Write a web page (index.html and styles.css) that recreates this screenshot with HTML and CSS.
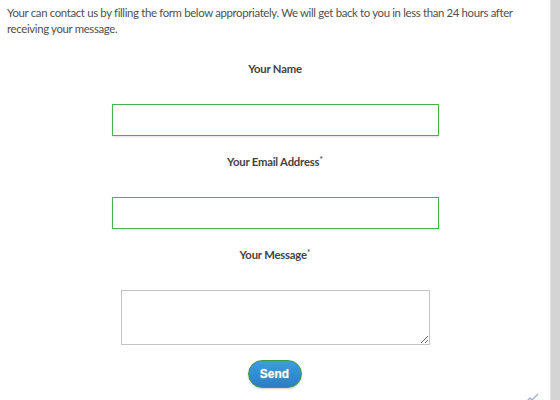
FILE: index.html
```html
<!DOCTYPE html>
<html>
<head>
<meta charset="utf-8">
<link rel="stylesheet" href="styles.css">
</head>
<body>
<div class="page">
  <main class="content">
    <p class="intro">Your can contact us by filling the form below appropriately. We will get back to you in less than 24 hours after receiving your message.</p>
    <form class="form">
      <label class="label">Your Name</label>
      <input class="field" type="text">
      <label class="label">Your Email Address<span class="req">*</span></label>
      <input class="field" type="text">
      <label class="label">Your Message<span class="req">*</span></label>
      <textarea class="message"></textarea>
      <button class="send" type="button">Send</button>
    </form>
    <svg class="corner" width="14" height="10" viewBox="0 0 14 10"><path d="M1 9 L4 6 L6 8 L12 2" fill="none" stroke="#9fb3cc" stroke-width="1.4"/></svg>
  </main>
  <div class="rail"></div>
</div>
</body>
</html>
```
FILE: styles.css
```css
html, body {
  margin: 0;
  padding: 0;
  background: #fff;
  height: 100%;
  overflow: hidden;
}
.page {
  display: flex;
  height: 400px;
}
.content {
  flex: 1;
  position: relative;
  font-family: Lato, "Open Sans", sans-serif;
  color: #555;
}
.rail {
  width: 9px;
  background: #d4d4d4;
  border-left: 1px solid #e2e2e2;
}
.intro {
  margin: 0;
  padding: 5px 8px 0 7px;
  font-size: 11.4px;
  letter-spacing: -0.35px;
  line-height: 16px;
  color: #505050;
}
.form {
  display: flex;
  flex-direction: column;
  align-items: center;
  margin-top: 23px;
}
.label {
  display: block;
  font-size: 11.3px;
  letter-spacing: -0.2px;
  font-weight: bold;
  line-height: 18px;
  color: #444;
  margin-bottom: 26px;
}
.req {
  font-weight: normal;
  font-size: 9px;
  vertical-align: top;
  line-height: 14px;
}
.field {
  box-sizing: border-box;
  width: 327px;
  height: 32px;
  border: 1px solid #4caf50;
  margin: 0 0 17px 0;
  padding: 0;
  box-shadow: 0 1px 2px rgba(0,0,0,0.12);
  background: #fff;
}
.message {
  box-sizing: border-box;
  width: 309px;
  height: 55px;
  border: 1px solid #c4c4c4;
  margin: 0 0 15px 0;
  padding: 0;
}
.send {
  box-sizing: border-box;
  width: 54px;
  height: 28px;
  border: 1px solid #3f9b3f;
  border-radius: 14px;
  background: linear-gradient(#3c9de0, #2a7dc4);
  color: #fff;
  font-family: "Liberation Sans", Arial, sans-serif;
  font-weight: bold;
  font-size: 12px;
  text-shadow: 0 0 2px rgba(230,220,120,0.6);
  box-shadow: 0 1px 2px rgba(0,0,0,0.2);
  padding: 0;
  margin-left: -1px;
}
.corner {
  position: absolute;
  left: 526px;
  top: 392px;
}
```
